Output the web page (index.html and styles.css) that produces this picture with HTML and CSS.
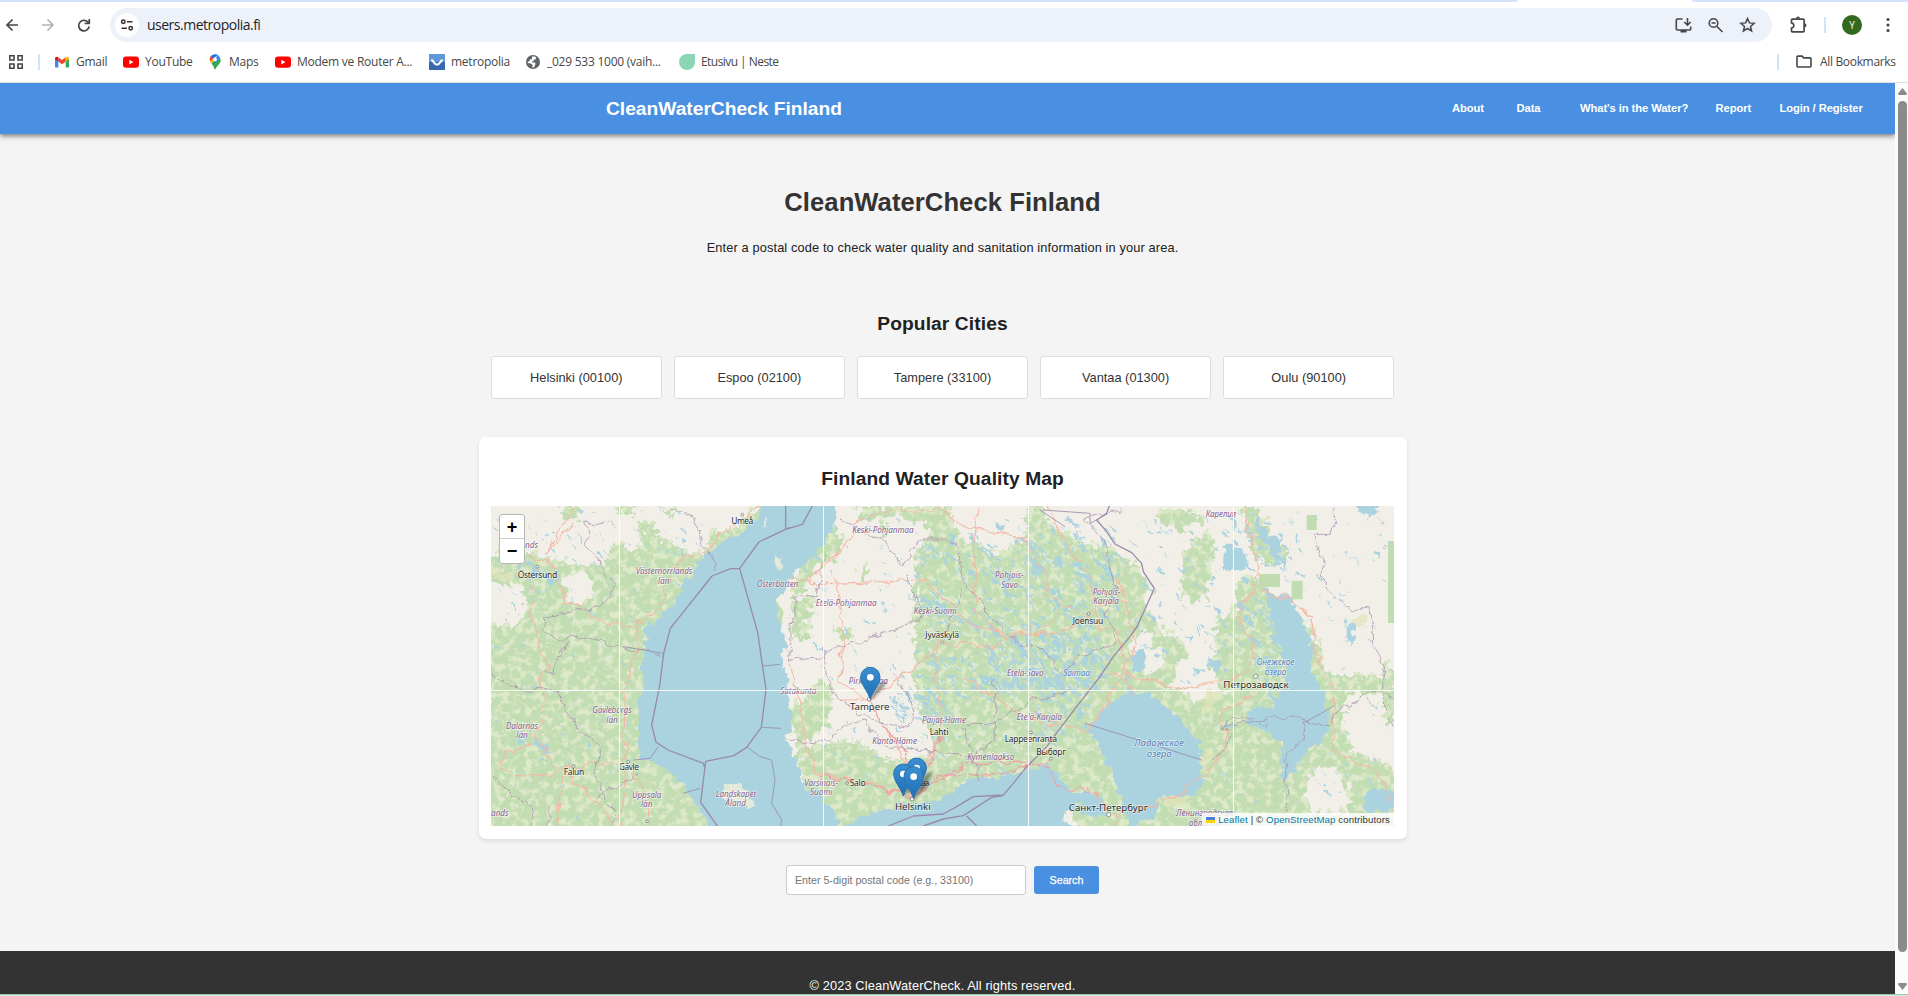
FILE: index.html
```html
<!DOCTYPE html>
<html lang="en">
<head>
<meta charset="utf-8">
<title>CleanWaterCheck Finland</title>
<link rel="stylesheet" href="styles.css">
</head>
<body>
<div class="tabstrip"><span class="tabstrip-left"></span><span class="tabstrip-right"></span></div>
<div class="toolbar">
  <svg class="nav-icons" width="110" height="48" viewBox="0 0 110 48" fill="none" stroke="#474747" stroke-width="1.7">
    <path d="M18 23H7.5M12.5 17.5L7 23l5.500 5.500"/>
    <path stroke="#b3b3b3" d="M42 23h10.500M47.500 17.500L53 23l-5.500 5.500"/>
    <path d="M88.300 20.500A5.300 5.300 0 1 0 89.200 24.500M89.300 17v4.500h-4.800"/>
  </svg>
  <div class="omnibox">
    <span class="site-info"><svg width="14" height="14" viewBox="0 0 14 14" fill="none" stroke="#333" stroke-width="1.500"><circle cx="3.300" cy="3.700" r="1.700"/><path d="M7 3.700h5.500M1.500 10.200H7"/><circle cx="10.700" cy="10.200" r="1.700"/></svg></span>
    <span class="url">users.metropolia.fi</span>
    <svg class="omni-icons" width="90" height="20" viewBox="0 0 90 20" fill="none" stroke="#474747" stroke-width="1.600">
      <path d="M8.500 4H3.300Q2.300 4 2.300 5v9q0 1 1 1h12.400q1 0 1-1v-2.500M13.500 3v7M10.300 7l3.200 3.200L16.700 7"/><path fill="#474747" stroke="none" d="M6.500 15h6v2.500h-6z"/>
      <circle cx="39.500" cy="8" r="4.300"/><path d="M42.700 11.200L48.500 17M37.500 8h4"/>
      <path stroke-width="1.500" d="M73.500 3.600l1.900 4.300 4.700.4-3.600 3.100 1.100 4.600-4.100-2.500-4.100 2.500 1.100-4.600-3.600-3.100 4.700-.4z"/>
    </svg>
  </div>
  <svg class="ext" width="18" height="20" viewBox="0 0 18 20" fill="none" stroke="#474747" stroke-width="1.700"><path d="M2.300 4.200h11q.8 0 .8.800v11q0 .8-.8.800h-11q-.8 0-.8-.8v-3q2.300-.3 2.300-2.500T1.500 8V5q0-.8.800-.8z"/><path fill="#474747" stroke="none" d="M6 3.500a2 2 0 0 1 4 0zM14.500 8.300a2 2 0 0 1 0 4z"/></svg>
  <span class="vline tool-line"></span>
  <span class="avatar">Y</span>
  <svg class="dots" width="4" height="16" viewBox="0 0 4 16" fill="#474747"><circle cx="2" cy="2.500" r="1.600"/><circle cx="2" cy="8" r="1.600"/><circle cx="2" cy="13.500" r="1.600"/></svg>
</div>
<div class="bookmarks">
  <svg class="apps" width="16" height="16" viewBox="0 0 16 16" fill="none" stroke="#474747" stroke-width="1.600"><path d="M1.800 1.800h4.200v4.200H1.800zM10 1.800h4.200v4.200H10zM1.800 10h4.200v4.200H1.800zM10 10h4.200v4.200H10z"/></svg>
  <span class="vline"></span>
  <span class="bm gmail"><svg width="16" height="16" viewBox="0 0 16 16"><path fill="#4285f4" d="M1 4l3.300 2.500V13.500H2q-1 0-1-1z"/><path fill="#34a853" d="M15 4l-3.300 2.500v7H14q1 0 1-1z"/><path fill="#ea4335" d="M4.300 3.300L8 6.100l3.700-2.800v4.200L8 10.300 4.300 7.500z"/><path fill="#c5221f" d="M1 4.300q0-1.600 1.700-1.600l1.600.6v4.200L1 5z"/><path fill="#fbbc04" d="M15 4.300q0-1.600-1.700-1.600l-1.600.6v4.200L15 5z"/></svg><span>Gmail</span></span>
  <span class="bm yt"><svg width="16" height="16" viewBox="0 0 16 16"><rect y="2.500" width="16" height="11.300" rx="3" fill="#f00"/><path fill="#fff" d="M6.300 5.700v4.800L10.500 8.100z"/></svg><span>YouTube</span></span>
  <span class="bm maps"><svg width="16" height="16" viewBox="0 0 16 16"><path fill="#34a853" d="M8 15.500q-.6 0-.8-1.200Q6.500 12 4.300 9.300L11 3l2 1q1.700 3-.8 6-3 3-3.400 4.800-.3.700-.8.700z"/><path fill="#fbbc04" d="M4.300 9.300L3 7.300l4-4L9.500 6z"/><path fill="#4285f4" d="M8 .3Q11.700.4 13 4L8.800 9 6 7l4-5z"/><path fill="#1a73e8" d="M8 .3Q4.500.5 3.400 2.500L6.200 5 10.300.9Q9 .3 8 .3z"/><path fill="#ea4335" d="M3.700 2.200Q2 4.500 3 7.300L6.300 4.500z"/><circle cx="8" cy="5.400" r="1.900" fill="#fff"/></svg><span>Maps</span></span>
  <span class="bm modem"><svg width="16" height="16" viewBox="0 0 16 16"><rect y="2.500" width="16" height="11.300" rx="3" fill="#f00"/><path fill="#fff" d="M6.300 5.700v4.800L10.500 8.100z"/></svg><span>Modem ve Router A...</span></span>
  <span class="bm metro"><svg width="16" height="16" viewBox="0 0 16 16"><path fill="#5f98d8" d="M0 0h16v8H0z"/><path fill="#3868b0" d="M0 8h16v8H0z"/><path fill="none" stroke="#fff" stroke-width="2.200" d="M2.300 6.200q1.500.3 2.500 2Q6.300 10.700 8 10.700t3.200-2.500q1-1.700 2.500-2"/></svg><span>metropolia</span></span>
  <span class="bm globe"><svg width="16" height="16" viewBox="0 0 16 16"><circle cx="8" cy="8" r="7" fill="#5f6368"/><path fill="#fff" d="M7 2.600l3-.1 1.300 1.300-.8 1.700H8.700v1.700H7v1.300h3.300v2.200l-1.300 2.500-1.700.6.300-2.700-1.800-1.700-3.200-.5.300-1.500 1.500.1.500-2.200H7z"/></svg><span>_029 533 1000 (vaih...</span></span>
  <span class="bm neste"><svg width="16" height="16" viewBox="0 0 16 16"><path fill="#8ad6b2" d="M8 0h8v8a8 8 0 1 1-8-8z"/></svg><span>Etusivu | Neste</span></span>
  <span class="vline right-line"></span>
  <svg class="folder" width="16" height="14" viewBox="0 0 16 14" fill="none" stroke="#474747" stroke-width="1.600"><path d="M1 2q0-.9.900-.9h4.200l1.600 1.800h6.400q.9 0 .9.900v7.300q0 .9-.9.900H1.900q-.9 0-.9-.9z"/></svg>
  <span class="all">All Bookmarks</span>
</div>

<div class="viewport">
  <div class="page">
    <header class="site-header">
      <div class="brand">CleanWaterCheck Finland</div>
      <nav><a class="n-about">About</a><a class="n-data">Data</a><a class="n-what">What's in the Water?</a><a class="n-report">Report</a><a class="n-login">Login / Register</a></nav>
    </header>
    <main>
      <h1>CleanWaterCheck Finland</h1>
      <p class="lead">Enter a postal code to check water quality and sanitation information in your area.</p>
      <h2 class="popular">Popular Cities</h2>
      <div class="cities"><div>Helsinki (00100)</div><div>Espoo (02100)</div><div>Tampere (33100)</div><div>Vantaa (01300)</div><div>Oulu (90100)</div></div>
      <section class="card">
        <h2>Finland Water Quality Map</h2>
        <div class="map">
          <svg class="tiles" width="903" height="320" viewBox="33 18 2709 960" preserveAspectRatio="none">
            <defs>
              <filter id="rough" x="0" y="0" width="2775" height="1000" filterUnits="userSpaceOnUse" color-interpolation-filters="sRGB">
                <feTurbulence type="fractalNoise" baseFrequency=".035" numOctaves="3" seed="4" result="n"/>
                <feDisplacementMap in="SourceGraphic" in2="n" scale="42" xChannelSelector="R" yChannelSelector="G"/>
              </filter>
              <filter id="wood" x="0" y="0" width="2775" height="1000" filterUnits="userSpaceOnUse" color-interpolation-filters="sRGB">
                <feTurbulence type="fractalNoise" baseFrequency=".045" numOctaves="4" seed="9" result="n"/>
                <feDisplacementMap in="SourceGraphic" in2="n" scale="60" xChannelSelector="R" yChannelSelector="G" result="s"/>
                <feColorMatrix in="n" values="0 0 0 0 .87  0 0 0 0 .915  0 0 0 0 .79  0 5 0 0 -2.350" result="p"/>
                <feComposite in="p" in2="s" operator="in" result="q"/>
                <feMerge><feMergeNode in="s"/><feMergeNode in="q"/></feMerge>
              </filter>
              <filter id="wiggle" x="0" y="0" width="2775" height="1000" filterUnits="userSpaceOnUse" color-interpolation-filters="sRGB">
                <feTurbulence type="fractalNoise" baseFrequency=".025" numOctaves="3" seed="2" result="n"/>
                <feDisplacementMap in="SourceGraphic" in2="n" scale="34" xChannelSelector="R" yChannelSelector="G"/>
              </filter>
              <linearGradient id="pin" x2="0" y2="1"><stop stop-color="#3b8fd0"/><stop offset="1" stop-color="#1f6fb5"/></linearGradient>
              <filter id="soft"><feGaussianBlur stdDeviation="4"/></filter>
              <g id="marker"><path d="M0 0L22-42Q50-62 46-48T4 0z" fill="#222" opacity=".45" filter="url(#soft)"/><path d="M0 0C-7-24-29-44-29-67a29 29 0 0 1 58 0C29-44 7-24 0 0z" fill="url(#pin)" stroke="#2a70ac" stroke-width="3"/><circle cy="-66" r="10" fill="#fff"/></g>
            </defs>
            <rect width="2800" height="1000" fill="#f2efe9"/>
            <g fill="#c3ddb3" filter="url(#wood)">
              <path d="M20 165L150 155 280 195 300 190 370 195 405 120 450 145 520 130 540 110 610 150 670 165 700 90 760 90 830 18 900 18 900 990H20V370L100 375 140 340 130 260 20 245z"/>
              <path d="M480 60l50 15 15 50-40 35-30-50zM250 18h60l-20 45-45-10zM410 18h60v25h-60zM540 30l40-5 0 25z"/>
              <!-- Ostrobothnia and the west coast -->
              <path d="M1050 60l40 50-10 60-70 30-40 70-50 20 60-110zM1130 18h200l20 50-100-20-90 10zM1000 280l-70 30 10 90 40-40 20-40zM970 360l30 20-20 40-45 0zM920 640l110-110 30 60-20 90-90 60zM1070 390l40-10 10 30-40 20zM1200 60l25 10-10 40-20-15zM1150 190l15 20-10 40-15-20z"/>
              <path d="M950 740l180-20 100 60 130-10 90 50 150-40 180-60 110-50v250l-250 40-220 60-250 30-150-60-60-90z"/>
              <!-- eastern lake district -->
              <path d="M1305 150l40-30-10-50 10-52h60l20 50 20 60 50 0 40 30 30 0 50-30 80-20 40 90 60-60 30 50 120 100 100 80-10 300-110 160-180 80-200 30-150-40-40-190-50-110z"/>
              <path d="M1650 18h40l10 60-30 100-20-60-20-40zM1690 60l110 70 80 10 90 50 40 70-50 120-200 200-60-100z"/>
              <!-- Karelia -->
              <path d="M2100 160l80-70 30 60-20 50-10 90-50 20-30-40zM2030 30l110 0 30 30-50 30-80-20zM1970 370l120 40 30 40 -20 80-60 30 20 90-60-10 0-70-60-60-70 20 -60-30zM2210 350l60-20 40 80 0 150-90 10-20-70z"/>
              <path d="M2270 240l60-10 30 40 0 100 30 100-20 150-120-20 10-200zM2350 290l150 100 40 150 60 20-10 90-150-30-150-120zM2290 18h40l50 110 50 20-50 50-60-30z"/>
              <path d="M1770 750l130-180 120 0 90-10 30 50 60-30 380-20 0 100 30 80-30 60-90 10-20 80 50 60 60-20 40 60v50H1780z"/>
              <path d="M2500 510l220 20 30 50-60 10-140-20zM2550 720l100 50 80 20 30 80v120h-140l-20-120zM2710 490l40 10v180l-40-20z"/>
            </g>
            <g fill="#c1dcb1"><path d="M2724 123h30v246h-30zM2337 222h63v39h-63zM2435 242h33v56h-33zM2480 45h30v45h-30z"/></g>
            <g fill="#e3e5b9" opacity=".7" filter="url(#rough)"><path d="M33 205l60 10-5 30H33zM2600 360l70-15-10 20-40 25zM2190 570l30 10-20 60-40-10zM2040 880l80 10-10 30-70-10zM2150 790l40-40 10 20-30 40z"/></g>
            <g filter="url(#rough)" fill="#f2efe9"><path d="M265 225l60-5 20 60-40 35-40-10-15-50zM2095 480l50-10 20 90-50 30-35-50zM1950 420l60-30 0 60 40-20 0 70-50 20-40-60z"/></g>
            <g id="ponds" fill="none" stroke="#aad3df" stroke-linecap="round" filter="url(#wiggle)"></g>
            <g fill="#aad3df" filter="url(#rough)">
              <path d="M865 0L830 65 785 95 735 125 705 140 665 175 635 225 600 280 575 320 545 350 500 380 495 420 500 450 485 500 495 580 470 600 475 700 475 785 540 795 590 830 620 875 650 915 700 1000H1075L1080 960 1050 920 1015 880 965 850 955 790 935 760 915 720 930 660 925 600 930 560 905 480 920 430 895 370 895 300 925 250 960 205 1020 150 1060 80 1080 0z"/>
              <path d="M1060 1000L1150 950 1260 915 1310 910 1390 890 1470 835 1560 830 1650 815 1700 790 1740 830 1780 880 1820 870 1880 910 1880 955 1810 950 1800 910 1760 930 1750 960 1790 1000z"/>
              <path d="M1880 620l60-50 80 10 70 70 60 70 20 80-20 90-100 0-40 70-60 20-25-80-40-100-60-120z"/>
              <path d="M2350 270l60 20 60 60 20 80 10 90 30 60 20 90-20 60-60 20-20 70-50 10 10-80-50-50-70-40 40-50 60 20-50-100 60 70 20-100-30-80z"/>
              <path d="M2650 890q40-50 90-10l0 50q-60 20-90-10zM2560 0h170l-30 20-40 30-20-25zM2320 30l40 70 40 20 10 100-30-60-50-60zM2230 130l60 30 10 60-70-10zM2600 370l30 10-20 60-10-10zM1950 470l30-20 20 50-30 20zM2185 470l50 30-25 30zM880 60l15 0-10 40-15 0z"/>
              <path d="M120 160l40 35 60 45-10 10-50-30 0 40-10-60zM160 710l50 30 10 20-30-5-30-30z"/>
            </g>
            <g fill="#e4ead9" filter="url(#rough)"><path d="M735 850l40-5 30 25 20 50-50 0-50-20zM890 160l20 20-10 30-20-20zM855 50l8 5-4 25-8-5z"/></g>
            <g fill="none" filter="url(#wiggle)" stroke-linejoin="round">
              <g stroke="#f3b9a6" stroke-width="3.500">
                <path d="M850 20L710 105 680 155 600 180 545 290 520 340 470 370 470 450 435 560 430 680 440 780 280 800 220 820 100 830 50 800M440 790L420 980M460 815l45 100 0 65M140 170l60 10 60 120 120 70 90 20M170 200l-20 140 50 150-20 60 15 60-25 100 60 90M280 20L200 160 290 60M260 825l110 100 40 60M250 830l-20 150M60 800l10-40 80-30"/>
                <path d="M940 240l50 0 120-120 20-60 100-30 160 0 60 50 180 30 70 120 0 60 130 60M950 240l100 10 290-10 90 90 60 60 80 10 170 0 150-100 50 0M1070 240l20 160-10 140 80 60 60 90 60 100 20 80M1380 420l-10 100 20 180-60 100M1390 430L1170 600 1080 600M1390 430l150 10 110-60M1500 20l-20 120 10 200 90 80 80-20 90-60M930 490l30 110 20 140 30 80 160 30 100 30"/>
                <path stroke="#ee9fa5" d="M1170 610l50 80 60 70 10 130-100-30-170-30M1300 890l160-100 180 0 70 10 20 60 120 20M1390 710l-100 180 90-60 20-5 160-5 150-40"/>
                <path d="M1450 530l200 130 90 20M2290 18l40 150-10 110-50 60 50 90-10 80-60 30-150 30-120-30-100-20M2330 270l90 20 80 60 0 90 60 120 0 190 60 30 90 50 20 80M1660 640l160 60 100-160 50-110-60-200M1820 860l80 90 20 30M1900 950l200-60 140-140-10-120 100-50M1700 20l70 120 60 100 30 150 50 0 50 200"/>
              </g>
              <g stroke="#a78fac" stroke-width="3" opacity=".75">
                <path d="M380 70l-60 0 0 60 90 130-50 60-170 30 0 40 50 35 50-20 170 50 90 5M570 20l70 30 70 165M33 520l70 45 100 5 30 10 60 110 70 60-20 80 60 100 0 90M180 510l40 10 10-50 30-40M40 820l60 60 60 50-10 60M350 890l130-70M210 980l0-60"/>
                <path d="M1080 60l130 60 60 80 40-60 10-20 110 0 20 120 30 40 80 100 50 50 90 20 50 80 30-50 130-50-30-90 30-80-40-140-60-70 110-10 0-20M1035 160l-30 130-60 0-20 190 100-10 50-30 200-60 60-30-60-130M1450 270l-30 70-30 70M1030 440l10 100 40 60 90 60 120 20 10-60-60-100M920 720l110 10 60-50 60-20 50 70 100 20 180 20 70-50-10-180M1450 680l50 160M1450 670l90 0 90-60 150-40"/>
                <path d="M2560 20v80h-60l30 100 0 60 70 60 70 10 10 110 40 60-20 90 40 90M2190 780l50-30 10-40-20-30 100-20 120-10 20 20 80 0 20-40 100-50 80 10M2230 680l20-20 80-10 30 30M2470 660l0 60-50 40 0 180"/>
              </g>
            </g>
            <g fill="none" stroke="#9a8aad" stroke-width="4" stroke-linejoin="round">
              <path d="M917 18v70l-80 38-58 79 54 192 25 172-14 113-44 60-38 25-85 17-4 33-11 90 62 88M930 82l-13 6M779 205l-27 1-56 22-125 157-20 75-12 97-24 118 13 51 36 24 106 40 4 13M997 18l-30 55-50 15"/>
              <path stroke-width="2.500" d="M430 440l120 20M850 498l50-5M847 682l55 3M460 780l50-5 25-35M800 740l40 30 35 10 10 60-10 70 30 50-5 30M660 865l-50 15"/>
              <path d="M1225 978L1300 948 1390 942 1430 920 1480 890 1570 885 1600 850 1640 800 1700 740 1740 685 1790 620 1825 575 1860 530 1900 470 1950 410 1972 378 2003 310 2023 265 1990 215 1985 190 1955 158 1905 132 1880 95 1850 60 1880 40 1888 18M1570 887l-35 5-85 55-60 10-60 21M1460 948l30 30"/>
              <path stroke-width="2.500" d="M1815 670l160 50 190 60M2473 668l90-50M1680 30l75 50M1690 30l140 10 0 30 20-10"/>
            </g>
            <g class="region">
              <text x="135" y="145">nds</text>
              <text x="467" y="222" textLength="170">Västernorrlands</text><text x="534" y="251">län</text>
              <text x="830" y="260" textLength="125">Österbotten</text><text x="337" y="640" textLength="118">Gävleborgs</text><text x="379" y="668">län</text>
              <text x="78" y="687" textLength="96">Dalarnas</text><text x="109" y="714">län</text><text x="456" y="893" textLength="88">Uppsala</text><text x="483" y="922">län</text>
              <text x="707" y="890" textLength="122">Landskapet</text><text x="736" y="918" textLength="62">Åland</text><text x="33" y="947">ands</text>
              <text x="1117" y="98" textLength="184">Keski-Pohjanmaa</text><text x="1007" y="317" textLength="183">Etelä-Pohjanmaa</text>
              <text x="1301" y="343" textLength="129">Keski-Suomi</text><text x="1545" y="235" textLength="86">Pohjois-</text><text x="1563" y="263" textLength="51">Savo</text>
              <text x="1106" y="553" textLength="118">Pirkanmaa</text><text x="901" y="583" textLength="108">Satakunta</text><text x="1581" y="527" textLength="110">Etelä-Savo</text>
              <text x="1326" y="668" textLength="132">Päijät-Häme</text><text x="1177" y="733" textLength="134">Kanta-Häme</text><text x="1610" y="660" textLength="136">Etelä-Karjala</text>
              <text x="1462" y="779" textLength="141">Kymenlaakso</text><text x="973" y="857" textLength="101">Varsinais-</text><text x="990" y="886" textLength="67">Suomi</text>
              <text x="1838" y="285" textLength="83">Pohjois-</text><text x="1840" y="313" textLength="77">Karjala</text><text x="2177" y="51" textLength="91">Карелия</text>
              <text x="2088" y="949" textLength="171">Ленинградская</text><text x="2126" y="977" textLength="99">область</text>
            </g>
            <g class="region lake">
              <text x="1750" y="527" textLength="80">Saimaa</text><text x="2330" y="495" textLength="113">Онежское</text><text x="2354" y="524" textLength="65">озеро</text>
              <text class="big" x="1962" y="737" textLength="150">Ладожское</text><text class="big" x="2000" y="771" textLength="75">озеро</text>
            </g>
            <g class="town">
              <text x="754" y="73" textLength="66">Umeå</text><text x="113" y="234" textLength="119">Östersund</text><text x="251" y="825" textLength="62">Falun</text><text x="416" y="811" textLength="61">Gävle</text>
              <text x="1336" y="415" textLength="101">Jyväskylä</text><text x="1349" y="704" textLength="56">Lahti</text><text x="1574" y="725" textLength="157">Lappeenranta</text><text x="1669" y="766" textLength="89">Выборг</text>
              <text x="1109" y="857" textLength="48">Salo</text><text x="1778" y="371" textLength="92">Joensuu</text><text x="1284" y="858" textLength="64">Vantaa</text>
              <g class="large"><text x="1110" y="630" textLength="118">Tampere</text><text x="1245" y="929" textLength="107">Helsinki</text><text x="1766" y="932" textLength="238">Санкт-Петербург</text><text x="2230" y="563" textLength="196">Петрозаводск</text></g>
            </g>
            <g fill="#fff" stroke="#666" stroke-width="2"><circle cx="787" cy="44" r="4"/><circle cx="172" cy="200" r="4"/><circle cx="280" cy="799" r="4"/><circle cx="445" cy="785" r="4"/><circle cx="501" cy="964" r="4"/><circle cx="1387" cy="427" r="4"/><circle cx="1377" cy="714" r="4"/><circle cx="1653" cy="697" r="4"/><circle cx="1713" cy="776" r="4"/><circle cx="1101" cy="849" r="4"/><circle cx="1826" cy="341" r="4"/><circle cx="2327" cy="529" r="6"/><circle cx="1886" cy="944" r="6"/><circle cx="1168" cy="597" r="6"/><circle cx="1297" cy="897" r="6"/></g>
            <path stroke="#fff" stroke-opacity=".85" stroke-width="3" d="M418.500 0v1000M1030.500 0v1000M1645.500 0v1000M2260.500 0v1000M0 571.500h2800"/>
            <use href="#marker" x="1171" y="598"/><use href="#marker" x="1310" y="870"/><use href="#marker" x="1270" y="888"/><use href="#marker" x="1301" y="896"/>
          </svg>
          <div class="zoomctl"><span>+</span><span>−</span></div>
          <div class="attribution"><svg width="9" height="6" viewBox="0 0 9 6"><path fill="#4c7be1" d="M0 0h9v3H0z"/><path fill="#ffd500" d="M0 3h9v3H0z"/></svg> <a>Leaflet</a> | © <a>OpenStreetMap</a> contributors</div>
        </div>
      </section>
      <form class="search"><input type="text" placeholder="Enter 5-digit postal code (e.g., 33100)"><button type="button">Search</button></form>
    </main>
    <footer>© 2023 CleanWaterCheck. All rights reserved.</footer>
  </div>
  <div class="scrollbar"><svg width="9" height="7" viewBox="0 0 9 7"><path fill="#8b8b8b" d="M4.500 0L9 5.500 8.500 7h-8L0 5.500z"/></svg><span class="thumb"></span><svg width="9" height="7" viewBox="0 0 9 7"><path fill="#8b8b8b" d="M4.500 7L9 1.500 8.500 0h-8L0 1.500z"/></svg></div>
</div>
<div class="bottom-edge"></div>
<script src="map.js"></script>
</body>
</html>
```
FILE: styles.css
```css
* { box-sizing: border-box; }
body { margin: 0; width: 1908px; height: 996px; overflow: hidden; background: #fff; font-family: "Liberation Sans", Arial, sans-serif; color: #212121; }
svg { display: block; flex: none; }
.tabstrip { height: 2px; display: flex; justify-content: space-between; }
.tabstrip-left { width: 1518px; background: #d3e3fd; border-radius: 0 0 3px 0; }
.tabstrip-right { width: 216px; background: #d3e3fd; border-radius: 0 0 0 3px; }
.toolbar { height: 46px; display: flex; align-items: center; }
.nav-icons { margin-top: 1px; }
.omnibox { width: 1662px; height: 34px; border-radius: 17px; background: #edf1fa; display: flex; align-items: center; padding-left: 5px; }
.site-info { width: 24px; height: 24px; border-radius: 50%; background: #fff; display: flex; align-items: center; justify-content: center; }
.url { margin-left: 8px; font: 14px/20px "Open Sans", "Noto Sans", sans-serif; letter-spacing: -.5px; font-variant-ligatures: none; color: #1f1f1f; }
.omni-icons { margin-left: auto; margin-right: 8px; }
.ext { margin-left: 18px; }
.vline { width: 2px; height: 16px; background: #d3e3fd; flex: none; }
.tool-line { margin-left: 16px; }
.avatar { margin-left: 16px; width: 20px; height: 20px; border-radius: 50%; background: #33691e; color: #fff; font: 10px/20px "Open Sans", sans-serif; text-align: center; }
.dots { margin-left: 24px; }
.bookmarks { height: 35px; margin-bottom: -1px; display: flex; align-items: center; padding: 0 12px 6px 8px; border-bottom: 1px solid #dedede; font: 12px/16px "Open Sans", "Noto Sans", sans-serif; letter-spacing: -.25px; color: #474747; white-space: nowrap; }
.apps + .vline { margin-left: 14px; margin-right: 14px; }
.bm { display: flex; align-items: center; gap: 6px; flex: none; }
.gmail { width: 69px; }
.yt { width: 84px; }
.maps { width: 68px; }
.modem { width: 154px; }
.metro { width: 96px; }
.globe { width: 154px; }
.neste { letter-spacing: -.55px; }
.right-line { margin-left: auto; margin-right: 17px; }
.all { margin-left: 8px; width: 76px; letter-spacing: -.33px; }
.viewport { height: 911px; display: flex; margin-top: 1px; }
.page { width: 1895px; background: #f4f4f4; display: flex; flex-direction: column; overflow: hidden; }
.site-header { height: 51px; flex: none; background: #4a90e2; box-shadow: 0 2px 5px rgba(0,0,0,.5); display: flex; align-items: center; justify-content: space-between; padding: 0 32px 0 606px; color: #fff; }
.brand { font-size: 19.2px; font-weight: bold; }
nav { display: flex; padding-bottom: 2px; font-size: 11.2px; font-weight: bold; letter-spacing: -.08px; white-space: nowrap; }
.n-about { width: 64.500px; }
.n-data { width: 63.500px; }
.n-what { width: 135.500px; }
.n-report { width: 64px; }
.n-login { width: 83.500px; }
main { width: 1885px; height: 817px; flex: none; display: flex; flex-direction: column; align-items: center; }
h1, h2, p { margin: 0; }
h1 { margin-top: 53px; font-size: 25.6px; line-height: 30px; letter-spacing: .07px; color: #333; }
.lead { margin-top: 21px; font-size: 12.8px; line-height: 20px; letter-spacing: .12px; }
h2 { font-size: 19.2px; line-height: 24px; letter-spacing: .1px; }
.popular { margin-top: 54px; }
.cities { margin-top: 20px; width: 903px; display: grid; grid-template-columns: repeat(5, 1fr); gap: 12.500px; }
.cities div { height: 43px; background: #fff; border: 1px solid #ddd; border-radius: 3px; font-size: 12.8px; line-height: 41px; text-align: center; color: #333; }
.card { margin-top: 38px; width: 928px; height: 402px; border-radius: 7px; background: #fff; box-shadow: 0 2px 4px rgba(0,0,0,.1); padding: 30px 12px 13px; display: flex; flex-direction: column; align-items: center; }
.map { position: relative; margin-top: 15px; width: 903px; height: 320px; overflow: hidden; }
.region { font: italic 24.500px "Noto Sans", sans-serif; fill: #85608d; stroke: #fff; stroke-opacity: .6; stroke-width: 4px; paint-order: stroke; }
.lake { fill: #5280bb; }
.lake .big { font-size: 29px; }
.town { font: 25.500px "Noto Sans", sans-serif; fill: #2b2b2b; stroke: #fff; stroke-opacity: .6; stroke-width: 4px; paint-order: stroke; }
.large { font-size: 29px; }
.zoomctl { position: absolute; left: 8px; top: 8px; width: 26px; height: 50px; border: 1px solid #b8b8b4; border-radius: 3px; background: #fff; font: bold 18px/24px "Liberation Sans", sans-serif; color: #000; text-align: center; overflow: hidden; }
.zoomctl span { display: block; height: 24px; }
.zoomctl span:first-child { border-bottom: 1px solid #ccc; }
.attribution { position: absolute; right: 0; bottom: 0; height: 13px; padding: 0 4px; background: rgba(255,255,255,.8); font-size: 9.600px; line-height: 13px; letter-spacing: .13px; color: #333; white-space: nowrap; }
.attribution svg { display: inline-block; }
.attribution a { color: #0078a8; }
.search { margin-top: 26px; display: flex; align-items: center; gap: 8px; }
.search input { width: 240px; height: 30px; border: 1px solid #ccc; border-radius: 3px; padding: 0 8px; font: 10.670px "Liberation Sans", Arial, sans-serif; }
.search input::placeholder { color: #757575; }
.search button { width: 65px; height: 28px; border: 0; border-radius: 3px; background: #4a90e2; color: #fff; font: 10.670px "Liberation Sans", Arial, sans-serif; padding: 0; -webkit-text-stroke: .25px #fff; }
footer { height: 43px; flex: none; background: #333; color: #fff; width: 1895px; padding: 26px 10px 0 0; font-size: 12.8px; line-height: 18px; letter-spacing: .12px; text-align: center; }
.scrollbar { width: 13px; background: #fcfcfc; display: flex; flex-direction: column; align-items: center; padding: 5px 1px 4px 3px; }
.thumb { width: 9px; height: 851px; margin: 6px 0 auto; border-radius: 5px; background: #8b8b8b; }
.bottom-edge { height: 2px; background: linear-gradient(#9fc7b2 50%, #cdeedd 50%); }
```
FILE: map.js
```js
// Scatter small lakes over the land, elongated from north-west to south-east.
let seed = 11;
const rnd = () => (seed = (seed * 16807) % 2147483647) / 2147483647;
// x, y, width, height, count, maximum size
const areas = [
  [33, 18, 640, 350, 150, 9], [33, 380, 420, 590, 90, 8],
  [1000, 30, 300, 520, 60, 9], [1300, 100, 240, 480, 190, 15],
  [1540, 60, 360, 520, 260, 20], [1500, 400, 350, 180, 150, 22],
  [1230, 560, 170, 100, 80, 14], [1000, 660, 650, 190, 90, 8],
  [1650, 600, 180, 110, 60, 14], [1850, 40, 400, 500, 130, 13],
  [2230, 40, 230, 200, 60, 16], [2270, 280, 150, 230, 70, 22],
  [2450, 40, 290, 400, 40, 9], [2200, 590, 540, 380, 50, 9],
  [900, 100, 100, 120, 25, 9]
];
const group = document.getElementById('ponds');
for (const [x, y, w, h, n, size] of areas) {
  for (let i = 0; i < n; i++) {
    const len = 2 + rnd() * rnd() * size * 1.3;
    const p = document.createElementNS('http://www.w3.org/2000/svg', 'path');
    const a = len * (0.5 + rnd() * 0.8), b = len * (0.5 + rnd() * 0.7);
    p.setAttribute('d', `M${x + rnd() * w} ${y + rnd() * h}q${a * rnd()} ${b * rnd()} ${a} ${b}t${a * rnd()} ${b * 0.8}`);
    p.setAttribute('stroke-width', 2 + rnd() * rnd() * size * 0.6);
    group.appendChild(p);
  }
}
```
